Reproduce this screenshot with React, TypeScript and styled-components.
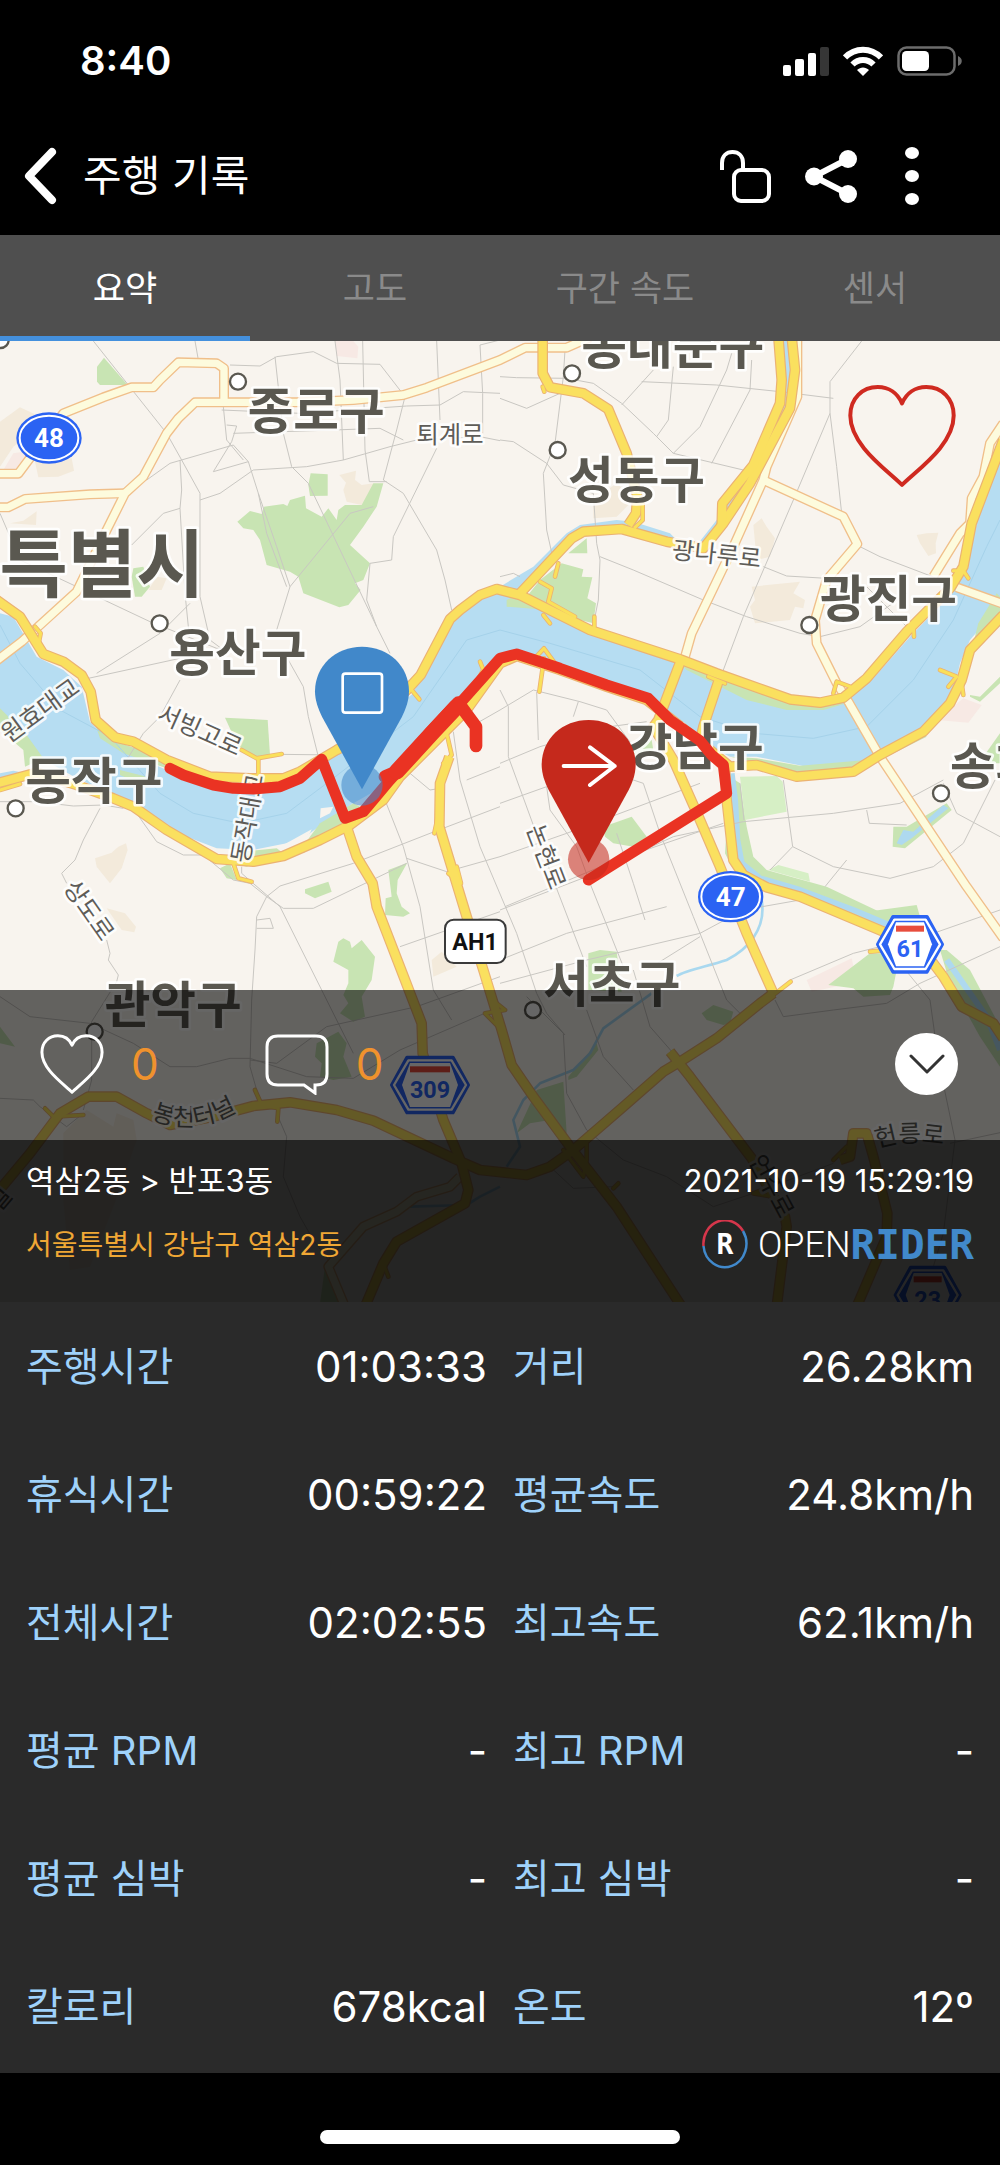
import React, { useState } from "react";
import styled, { createGlobalStyle } from "styled-components";

const Global = createGlobalStyle`
  *, *::before, *::after { box-sizing: border-box; }
  body {
    margin: 0;
    background: #000;
    color: #fff;
    font-family: Inter, "Noto Sans CJK KR", sans-serif;
  }
  button { font: inherit; color: inherit; background: none; border: 0; padding: 0; cursor: pointer; }
  svg { display: block; }
`;

const Screen = styled.div`
  display: flex;
  flex-direction: column;
`;

const StatusBar = styled.div`
  display: flex;
  align-items: center;
  justify-content: space-between;
  height: 122px;
  padding: 0 37px 0 80px;
`;

const Clock = styled.time`
  font-size: 40px;
  line-height: 48px;
  font-weight: 600;
`;

const StatusIcons = styled.div`
  display: flex;
  align-items: center;
  gap: 14px;
`;

const Header = styled.header`
  display: flex;
  align-items: center;
  height: 113px;
  padding: 0 67px 5px 24px;
`;

const Title = styled.h1`
  flex: 1;
  margin: 0 0 0 26px;
  font-size: 42px;
  line-height: 56px;
  font-weight: 400;
`;

const HeaderActions = styled.div`
  display: flex;
  align-items: center;
  gap: 34px;
`;

const IconButton = styled.button`
  display: flex;
  align-items: center;
  justify-content: center;
`;

const MoreButton = styled(IconButton)`
  width: 42px;
`;

const Tabs = styled.div`
  display: grid;
  grid-template-columns: repeat(4, 1fr);
  height: 106px;
  background: #4f4f4f;
`;

const Tab = styled.button<{ $active: boolean }>`
  border-top: 5px solid transparent;
  border-bottom: 5px solid ${(p) => (p.$active ? "#4490dd" : "transparent")};
  color: ${(p) => (p.$active ? "#fff" : "#8a8a8a")};
  font-size: 35px;
  line-height: 48px;
`;

const MapPanel = styled.section`
  position: relative;
  display: flex;
  flex-direction: column;
  overflow: hidden;
  background: #f8f4ee;
`;

const MapCanvas = styled.svg`
  position: absolute;
  inset: 0;
  width: 100%;
  height: 100%;
`;

const MapWindow = styled.div`
  position: relative;
  display: flex;
  align-items: flex-start;
  justify-content: flex-end;
  height: 649px;
  padding: 43px 43px 0;
`;

const ActionBar = styled.div`
  position: relative;
  display: flex;
  align-items: center;
  height: 150px;
  padding: 0 42px 2px 40px;
  background: rgba(0, 0, 0, 0.6);
`;

const CountButton = styled.button`
  display: flex;
  align-items: center;
  gap: 27px;
  margin-right: 106px;
  color: #f0922d;
  font-size: 44px;
  line-height: 62px;
`;

const CollapseButton = styled(IconButton)`
  width: 63px;
  height: 62px;
  margin-left: auto;
  border-radius: 50%;
  background: #fff;
`;

const RideInfo = styled.div`
  position: relative;
  display: flex;
  flex-direction: column;
  gap: 18px;
  padding: 19px 26px 33px;
  background: rgba(0, 0, 0, 0.85);
`;

const InfoRow = styled.div`
  display: flex;
  align-items: center;
  justify-content: space-between;
  font-size: 31px;
  line-height: 44px;
`;

const Address = styled.span`
  color: #efa735;
  font-size: 28px;
  line-height: 48px;
`;

const Brand = styled.span`
  display: flex;
  align-items: center;
  height: 48px;
`;

const BrandMark = styled.span`
  position: relative;
  display: grid;
  place-items: center;
  width: 46px;
  height: 50px;
  margin-right: 10px;
  font: 700 28px/50px "DejaVu Sans Mono", monospace;

  svg { position: absolute; inset: 0; }
`;

const BrandOpen = styled.span`
  font: 300 36px/48px "Roboto", sans-serif;
`;

const BrandRider = styled.span`
  color: #4189cb;
  font: 700 41px/48px "DejaVu Sans Mono", monospace;
`;

const Stats = styled.dl`
  display: grid;
  grid-template-columns: 1fr 1fr;
  column-gap: 26px;
  margin: 0;
  padding: 1px 26px 2px;
  background: #2a2a2a;
`;

const Stat = styled.div`
  display: flex;
  align-items: center;
  justify-content: space-between;
  height: 128px;
  line-height: 56px;
`;

const StatName = styled.dt`
  color: #9fd2fb;
  font-size: 40px;
`;

const StatValue = styled.dd`
  margin: 0;
  font-size: 42px;
`;

const HomeArea = styled.footer`
  display: flex;
  justify-content: center;
  padding: 57px 0 21px;
`;

const HomeIndicator = styled.div`
  width: 36%;
  height: 14px;
  border-radius: 7px;
  background: #fff;
`;

const HEART = "M50 99 C36 84 3 60 3 31 C3 14 14 3 28 3 C38 3 46 9 50 19 C54 9 62 3 72 3 C86 3 97 14 97 31 C97 60 64 84 50 99 Z";

function Heart({ width, height, color, stroke }: { width: number; height: number; color: string; stroke: number }) {
  return (
    <svg width={width} height={height} viewBox="0 0 100 102" preserveAspectRatio="none" aria-hidden="true">
      <path d={HEART} fill="none" stroke={color} strokeWidth={stroke} strokeLinejoin="round" vectorEffect="non-scaling-stroke" />
    </svg>
  );
}

/* Map geometry, in map units (three per screen pixel at the design width). */

const WATER = [
  "M0 1840 L40 1850 110 1970 190 2010 245 2060 270 2165 345 2240 400 2265 500 2310 630 2350 850 2355 1010 2265 1240 2080 1262 2025 1350 1857 1440 1785 1500 1770 1630 1830 1770 1900 2040 1985 2150 2040 2290 2105 2370 2130 2480 2125 2540 2100 2620 2035 2730 1910 2860 1775 2900 1700 2930 1570 3000 1380 L3000 1800 2970 1850 2910 1920 2880 1990 2860 2080 2800 2170 2700 2230 2600 2290 2420 2300 2270 2270 2190 2270 2100 2225 1940 2100 1680 2010 1550 1968 1500 1990 1380 2135 1200 2330 1060 2410 970 2470 930 2500 860 2530 760 2550 650 2545 560 2510 440 2440 340 2385 230 2335 125 2275 80 2210 0 2140 Z",
  "M1500 1760 L1600 1700 1700 1600 1740 1575 1850 1560 1900 1565 2010 1600 2040 1630 1990 1630 1865 1590 1750 1600 1715 1620 1560 1790 Z",
  "M2095 1630 L2150 1560 2180 1510 2280 1380 2350 1200 2352 1020 2368 1020 2372 1140 2360 1220 2270 1420 2190 1540 2130 1640 Z",
  "M0 2320 L40 2312 60 2316 0 2335 Z",
];

const LAND = "#f8f4ee";

const BUILT = [
  "M0 1265 L60 1222 110 1245 90 1300 40 1340 0 1400 Z",
  "M105 1385 L215 1375 222 1412 175 1430 115 1432 Z",
  "M30 1570 L70 1562 110 1534 108 1575 Z",
  "M1018 1425 L1068 1412 1065 1440 1085 1455 1120 1450 1118 1475 1085 1515 1040 1505 1030 1470 1038 1448 Z",
  "M445 1770 L470 1730 500 1735 485 1770 Z",
  "M285 2575 L335 2558 355 2540 378 2530 383 2550 365 2605 330 2650 290 2600 Z",
  "M320 2725 L375 2740 408 2780 403 2797 365 2790 Z",
  "M1780 1500 L1850 1450 1900 1500 1850 1550 1780 1555 Z",
  "M2260 1575 L2285 1555 2300 1580 2325 1615 2310 1670 2270 1680 Z",
  "M2255 1760 L2400 1745 2380 1780 2415 1800 2410 1825 2385 1820 2370 1860 2265 1870 2250 1820 2265 1800 Z",
  "M2750 1605 L2780 1600 2815 1598 2807 1630 2808 1660 2785 1668 2760 1630 Z",
  "M1295 2880 L1325 2855 1370 2900 1300 2930 Z",
  "M190 3400 L260 3330 340 3380 350 3340 400 3360 410 3420 340 3620 270 3800 210 3810 190 3600 Z",
];

const PINK = [
  "M1005 1023 L1060 1023 1075 1040 1072 1075 1010 1068 Z",
  "M10 1410 L40 1360 70 1355 90 1380 60 1410 Z",
  "M2810 2160 L2890 2095 2945 2115 2905 2168 Z",
  "M2420 2940 L2555 2875 2565 2920 2530 2955 2435 2975 Z",
];

const PARKS = [
  "M712 1565 L750 1533 785 1542 792 1520 850 1512 862 1518 870 1500 915 1487 918 1525 965 1550 985 1525 1010 1560 1015 1530 1035 1515 1085 1515 1120 1450 1150 1450 1130 1520 1090 1580 1050 1635 1110 1690 1090 1740 1065 1750 1082 1770 1045 1815 1018 1822 910 1780 895 1730 870 1715 800 1695 780 1620 760 1590 730 1585 Z",
  "M932 1420 L983 1423 983 1487 930 1488 925 1455 Z",
  "M312 1073 L383 1155 300 1155 291 1145 291 1100 Z",
  "M400 1705 L430 1700 450 1760 425 1790 405 1790 395 1730 Z",
  "M1705 1660 L1760 1615 1762 1660 Z",
  "M1685 1690 L1750 1708 1745 1730 1777 1732 1762 1795 1788 1810 1780 1870 1700 1850 1580 1790 1620 1740 Z",
  "M1520 1800 L1560 1780 1640 1830 1580 1825 1520 1820 Z",
  "M675 2153 L803 2160 810 2265 770 2275 715 2240 Z",
  "M0 2125 L80 2205 130 2275 75 2300 70 2250 0 2190 Z",
  "M285 2170 L350 2225 480 2270 500 2305 370 2260 300 2215 Z",
  "M360 2310 L440 2330 440 2360 360 2325 Z",
  "M1165 2610 L1222 2588 1193 2640 1190 2680 1205 2720 1230 2740 1210 2750 1155 2745 1157 2695 1175 2690 Z",
  "M915 2668 L985 2645 995 2675 945 2695 915 2680 Z",
  "M1000 2885 L1015 2825 1030 2815 1050 2825 1055 2845 1085 2820 1125 2870 1115 2940 1085 2990 1095 3050 1060 3065 1020 3040 1045 3010 1030 2985 1045 2950 1045 2910 Z",
  "M950 3130 L1015 3095 1040 3130 1030 3170 1055 3230 1000 3240 960 3230 965 3190 945 3170 Z",
  "M900 2550 L960 2470 1060 2410 1100 2430 1000 2500 910 2560 Z",
  "M720 2555 L830 2545 850 2560 740 2600 700 2590 Z",
  "M660 2605 L690 2590 710 2640 680 2635 Z",
  "M1810 2480 L1895 2450 1940 2510 1900 2540 1840 2530 1815 2510 Z",
  "M1830 2250 L1955 2220 1960 2250 1890 2290 Z",
  "M2190 2330 L2220 2350 2240 2480 2260 2570 2300 2610 2480 2660 2670 2750 2660 2790 2480 2720 2280 2650 2190 2590 2175 2560 Z",
  "M2040 1990 L2150 2030 2350 2105 2460 2120 2540 2110 2470 2130 2360 2130 2240 2100 2140 2050 2060 2010 Z",
  "M2190 2270 L2270 2275 2400 2297 2600 2280 2760 2185 2780 2210 2580 2310 2390 2325 2280 2290 Z",
  "M2680 2480 L2720 2480 2840 2410 2855 2430 2715 2545 2678 2540 Z",
  "M1765 2860 L1800 2850 1850 2855 1865 2975 1765 2970 Z",
  "M2485 2955 L2610 2860 2700 2860 2680 2960 2670 2985 2590 2990 2560 2965 Z",
  "M2600 2735 L2750 2715 2760 2750 2670 2770 Z",
  "M2820 2850 L2840 2850 2910 2910 3000 3080 3000 3200 2940 3110 2850 2950 Z",
  "M2105 3040 L2140 3015 2200 3035 2190 3070 2170 3075 2120 3060 Z",
  "M1550 3400 L1610 3270 1690 3245 1700 3400 1650 3360 1590 3370 Z",
  "M1705 3230 L1790 3130 1795 3150 1730 3230 1705 3240 Z",
  "M2910 2085 L2940 2090 3000 2030 3000 2050 2940 2105 2910 2090 Z",
  "M2935 1870 L2990 1780 3000 1790 3000 1850 2920 1930 Z",
  "M2950 2270 L3000 2200 3000 2290 2970 2290 Z",
  "M0 3080 L45 3140 0 3130 Z",
  "M960 3910 L975 3800 1020 3910 Z",
];

const LIGHT_PARKS = [
  "M2220 2330 L2330 2328 2348 2345 2360 2435 2235 2460 Z",
  "M2305 2610 L2335 2595 2425 2620 2430 2645 Z",
];

const CREEKS = [
  "M2195 2320 L2205 2400 2212 2520 2225 2590 2280 2635 2400 2670 2560 2730 2680 2780",
  "M2840 2880 L2910 2980 2960 3050 3000 3150",
];

const STREAMS = [
  "M2285 2700 C2300 2790 2240 2850 2180 2880 C2120 2900 2060 2910 2030 2928",
  "M1955 2980 L1810 3085 1770 3160 1720 3210 1620 3250 1570 3300 1540 3360 1560 3440 1520 3500",
  "M1500 3560 L1440 3590 1400 3615 1230 3620",
];

const STREETS = [
  "M280 1023 L500 1300 545 1380 600 1480 600 1790 630 1920 670 1950",
  "M585 1023 L595 1080",
  "M690 1095 L780 1098 830 1070 940 1055 1010 1090 1140 1093 1215 1190 1190 1290 1150 1440 1210 1480 1310 1650 1335 1740 1355 1830",
  "M825 1070 L850 1300 875 1400 925 1450 1130 1880 1170 1960",
  "M1005 1023 L1020 1140 1030 1380",
  "M1088 1023 L1095 1350 1108 1445 1160 1445",
  "M1310 1023 L1320 1260",
  "M1500 1020 L1440 1035 1448 1180 1448 1300",
  "M440 1440 L510 1390 700 1335 745 1385 775 1480 830 1640 870 1760 830 1890",
  "M775 1480 L800 1600 860 1760",
  "M600 1500 L660 1480 760 1410 920 1400 1030 1380 1170 1340 1250 1320 1440 1310 1500 1322",
  "M1310 1345 L1180 1610 1175 1680 1110 1690 1100 1800 1130 1880",
  "M670 1220 L680 1320 730 1380",
  "M665 1230 L900 1240 1220 1218 1320 1215 1390 1175 1500 1180",
  "M680 1275 L710 1278 695 1325 640 1415 745 1385",
  "M700 1300 L1000 1290 1140 1285 1210 1320",
  "M540 1380 L545 1470 540 1525 490 1540 395 1635",
  "M540 1525 L555 1780 568 1910",
  "M870 1760 L1050 1540 1120 1520",
  "M0 1540 L60 1680 230 1760",
  "M270 1780 L450 1865 650 1945 760 1950",
  "M265 2035 L540 1975",
  "M290 2020 L480 1900 570 1810",
  "M540 2040 L480 2150 430 2200 380 2280",
  "M865 1980 L910 2060 925 2150 955 2270",
  "M840 2263 L1010 2265",
  "M0 2405 L110 2405 220 2418 310 2415 370 2425",
  "M300 2425 L250 2520 225 2580 185 2620 200 2650",
  "M320 2820 L330 2860 325 2880 355 2925 350 2945 275 3065 275 3240 250 3330",
  "M410 2440 L470 2525 550 2565 610 2565 700 2640 750 2650 800 2690 850 2725 940 2725 1220 2590",
  "M725 2600 L725 2620 840 2720 970 2980 1060 3160",
  "M800 2690 L840 2658 1060 2590 1290 2500 1500 2420",
  "M800 2690 L770 2750 765 2850 755 3000 750 3200 770 3270",
  "M770 2760 L810 2755 820 2785 770 2785",
  "M1155 2400 L1210 2540 1260 2720 1300 2970 1355 3060",
  "M1230 2320 L1290 2370 1320 2365",
  "M1200 2840 L1500 2735",
  "M1220 2575 L1340 2615 1500 2570",
  "M1360 2195 L1380 2340 1440 2540 1550 2800 1610 2980 1640 3040 1695 3105",
  "M1430 2170 L1500 2130 1600 2070 1740 2105 1820 2130 1900 2240",
  "M1400 2340 L1500 2300",
  "M1500 2070 L1525 2120 1525 2270 1660 2640 1760 2900",
  "M1610 2075 L1615 2220",
  "M1500 2290 L1620 2240 1830 2180 1940 2165",
  "M1500 2410 L1640 2360",
  "M1500 2570 L1700 2500 2100 2350",
  "M1500 2730 L1760 2630 2020 2510 2230 2465 2500 2440 2700 2410 2830 2340",
  "M1515 2720 L1850 2580 2170 2470",
  "M1640 2360 L1650 2430 1730 2540 1770 2650 1870 2900",
  "M1735 2105 L1720 2150",
  "M1870 2330 L1930 2350 1980 2500 2080 2750 2180 3000 2220 3040",
  "M1850 2500 L1900 2650 1935 2760",
  "M1500 2880 L1700 2800 2000 2720",
  "M1500 2950 L1760 2880 2100 2800 2230 2730 2400 2700",
  "M1940 2910 L2100 2810",
  "M2220 2350 L2232 2460",
  "M2350 2340 L2378 2540 2310 2610",
  "M2378 2540 L2500 2600 2670 2635 2800 2600 2890 2530 2985 2340",
  "M2600 2430 L2608 2470 2720 2475",
  "M2830 2350 L2870 2440 3000 2510",
  "M2540 2580 L2475 2660",
  "M2370 2940 L2560 2860 2800 2800 3000 2730",
  "M2700 2890 L2790 3000 2815 3180 2865 3420 2830 3700 2800 3800",
  "M2325 3000 L2350 3050 2500 3030 2660 3010 2760 2950 3000 2840",
  "M1500 1130 L1550 1133 1700 1135 1780 1150 1865 1210 1960 1300 2020 1360 2230 1410",
  "M1695 1050 L1690 1130 1665 1330 1630 1420 1640 1590 1660 1680",
  "M1500 1195 L1580 1225 1680 1180",
  "M1500 1320 L1540 1325 1640 1390 1690 1455 1780 1480 1790 1630 1800 1680 1795 1800 1785 1850",
  "M1960 1110 L1865 1215",
  "M1925 1145 L2150 1155 2340 1175 2500 1195",
  "M2020 1100 L2005 1260 1970 1310",
  "M2195 1060 L2180 1110 2100 1280 2020 1360",
  "M2255 1080 L2250 1170 2135 1390",
  "M2585 1023 L2490 1145 2490 1240 2510 1400 2525 1540",
  "M2490 1240 L2380 1500 2230 1850 2170 2010",
  "M2290 1700 L2360 1728 2480 1735 2560 1730",
  "M2580 1640 L2640 1670 2850 1750",
  "M1800 1670 L1900 1710 2110 1800 2240 1850 2400 1900 2460 1910 2580 1880 2720 1780",
  "M2600 1760 L2720 1880",
  "M1500 1730 L1540 1720 1560 1730",
  "M0 2990 L90 3050 270 3070 400 3130 510 3200 590 3200 690 3175 750 3175 920 3230 1060 3235 1200 3150 1500 3020",
  "M750 3180 L830 3190 980 3080 1250 3020 1500 2930",
  "M0 3295 L100 3300 120 3320 200 3380 250 3340",
  "M830 3340 L860 3410 850 3530 900 3650 940 3720 1000 3800",
  "M1580 2990 L1690 3100 1700 3280 1760 3390 1870 3480 2000 3530 2140 3620 2260 3580 2500 3490",
  "M1900 2910 L1950 3080 2020 3160",
  "M1760 3030 L1810 3170 1900 3270",
  "M1650 3500 L1720 3565 1840 3560",
  "M2850 3430 L3000 3398",
];

const LIGHT_ROADS = [
  "M-20 1990 L65 1925 230 1775 320 1590 375 1480 430 1430 500 1300 535 1255 585 1207 900 1207 1060 1200 1210 1185 1280 1163 1500 1080 1575 1043 1700 1043 1770 1012",
  "M-10 1421 L55 1421 190 1240 310 1192 395 1162 460 1162 480 1140 535 1087 650 1090 672 1105 672 1207",
  "M-10 1522 L25 1522 75 1497 270 1483 375 1480",
  "M2392 1010 L2392 1190 2300 1400 2290 1440 2200 1640 2075 1900 2055 1970",
  "M2290 1440 L2530 1550 2572 1632 2480 1740 2445 1860 2450 1930 2510 2050 2545 2105 2640 2270 2900 2660 3010 2815",
  "M2800 1730 L2880 1600 2910 1570 2915 1495 2950 1430 2970 1330 3010 1270",
  "M2870 1762 L3010 1812",
  "M1380 3530 L1350 3560 1250 3590 1190 3635 1090 3680 985 3800 1035 3920",
];

const RAMPS = [
  "M1928 1500 L1928 1560 1905 1582",
  "M1628 1160 L1633 1175",
  "M725 2250 L770 2275 845 2262",
  "M775 2275 L775 2335",
  "M1235 2070 L1258 2098",
  "M700 2590 L715 2635 755 2645",
  "M0 2370 L60 2352",
  "M1675 1690 L1665 1730",
  "M1620 1745 L1655 1765 1645 1805 1725 1850",
  "M1783 1850 L1783 1880",
  "M1650 1870 L1630 1845",
  "M1632 1945 L1665 1990 1595 1985 Z",
  "M1632 1975 L1618 2075",
  "M1340 2200 L1355 2265 1330 2290",
  "M1440 1985 L1450 2010 1430 2045",
  "M1370 2600 L1383 2650 1345 2620",
  "M1320 2420 L1303 2500",
  "M105 1880 L122 1900 115 1935",
  "M2820 2010 L2870 2030 2845 2060",
  "M2885 2050 L2890 2085",
  "M2500 2080 L2510 2045 2550 2060",
  "M2125 2030 L2175 2050",
  "M2860 1712 L2890 1712 2905 1735",
  "M2740 1875 L2742 1910",
  "M2320 2985 L2372 2945",
  "M2610 2855 L2640 2852",
  "M1490 3010 L1515 3030 1455 3040 1490 3075",
  "M135 3325 L160 3350 250 3345",
  "M765 3270 L785 3315 835 3325 832 3365",
  "M1720 3450 L1760 3430 1760 3480 1750 3530 1690 3450",
  "M1840 3565 L1855 3550",
  "M2500 3480 L2540 3440",
  "M2260 3580 L2310 3560 2320 3590 Z",
  "M1150 3790 L1165 3830",
];

const MAIN_ROADS = [
  "M-10 1800 L60 1850 130 1962 190 1985 245 2025 272 2075 287 2160 345 2212 400 2225 500 2280 630 2330 750 2335 850 2335 900 2315 1010 2250 1100 2200 1230 2060 1262 2025 1350 1857 1380 1830 1440 1785 1490 1767 1560 1785 1630 1820 1770 1890 2040 1978 2150 2020 2370 2098 2460 2108 2530 2093 2600 2035 2720 1895 2850 1765 2890 1700 2915 1570 3010 1320",
  "M1560 1780 L1715 1615 1750 1595 1865 1587 2000 1625 2110 1645 2170 1570 2250 1450 2370 1225 2385 1110 2375 1010",
  "M2335 1010 L2345 1140 2340 1210 2260 1395 2167 1510 2165 1580",
  "M1628 1010 L1628 1120 1650 1162 1750 1180 1825 1228 1880 1360 1912 1490 1908 1540 1885 1575",
  "M-10 2350 L110 2318 230 2355 340 2395 400 2420 500 2490 650 2577 760 2585 850 2568 960 2520 1050 2475 1150 2400 1200 2330 1400 2130 1500 1990 1550 1968 1680 2010 1820 2060 1940 2100 2100 2225 2190 2300 2270 2295 2390 2330 2560 2315 2640 2265 2770 2195 2850 2110 2885 2040 2910 1950 3010 1845",
  "M2045 1975 L1975 2160 1960 2180 2020 2280 2100 2460 2160 2600 2240 2800 2320 2980",
  "M2155 2045 L2110 2180 2100 2225",
  "M2175 2300 L2180 2400 2200 2580 2230 2625 2300 2662 2400 2690 2650 2795 2800 2890 2830 2930 2885 3020 2980 3070 3010 3115",
  "M1040 2480 L1070 2570 1118 2650 1130 2720 1215 2940 1265 3070 1268 3160 1330 3360 1385 3490 1405 3570 1395 3610 1190 3725 1150 3790 1095 3920",
  "M1348 2270 L1320 2350 1318 2480 1400 2750 1450 2910 1505 3090 1535 3195 1600 3290 1710 3440 1850 3620 2045 3920",
  "M2320 2980 L2280 3010 2150 3115 2040 3185 1990 3215 1870 3320 1720 3450 1650 3500 1580 3525 1440 3510 1360 3475 1120 3362 1010 3330 870 3307 760 3318 640 3350 510 3375 440 3340 350 3290 265 3290 180 3340 90 3460 -10 3580",
  "M2010 3155 L2070 3230 2255 3475 2355 3650 2360 3680 2330 3920",
  "M2520 3480 L2550 3470 2560 3400 2600 3400 2620 3470 2662 3640 2660 3710 2570 3920",
];

const ROUTE = "M510 2305 L550 2325 640 2355 700 2365 760 2367 840 2360 900 2335 965 2278 1035 2455 1090 2435 1170 2340 1380 2110 1500 1975 1550 1962 1680 2005 1820 2055 1945 2095 2010 2160 2100 2222 2135 2265 2170 2295 2180 2380 1765 2640";

const DOTS = [
  [2, 1020], [714, 1145], [479, 1870], [1716, 1120], [1673, 1350],
  [2428, 1875], [47, 2425], [2823, 2380], [284, 3095], [1599, 3030],
];

const DISTRICTS = [
  { name: "동대문구", x: 1744, y: 1092 },
  { name: "종로구", x: 743, y: 1287 },
  { name: "성동구", x: 1704, y: 1493 },
  { name: "용산구", x: 508, y: 2012 },
  { name: "광진구", x: 2460, y: 1851 },
  { name: "동작구", x: 76, y: 2396 },
  { name: "강남구", x: 1880, y: 2295 },
  { name: "송파구", x: 2850, y: 2352 },
  { name: "관악구", x: 314, y: 3070 },
  { name: "서초구", x: 1630, y: 3005 },
];

const STREET_NAMES = [
  { name: "퇴계로", x: 1350, y: 1301, turn: 0 },
  { name: "광나루로", x: 2150, y: 1662, turn: 6 },
  { name: "원효대교", x: 120, y: 2130, turn: -36 },
  { name: "서빙고로", x: 600, y: 2190, turn: 24 },
  { name: "동작대교", x: 742, y: 2455, turn: -80 },
  { name: "상도로", x: 268, y: 2730, turn: 55 },
  { name: "논현로", x: 1640, y: 2570, turn: 69 },
  { name: "언주로", x: 2316, y: 3558, turn: 62 },
  { name: "널", x: -2, y: 3596, turn: -50 },
];

function Shapes({ paths, fill }: { paths: string[]; fill: string }) {
  return <g fill={fill}>{paths.map((d) => <path key={d} d={d} />)}</g>;
}

function Lines({ paths, color, width, cap = "butt" }: { paths: string[]; color: string; width: number; cap?: "butt" | "round" }) {
  return (
    <g fill="none" stroke={color} strokeWidth={width} strokeLinejoin="round" strokeLinecap={cap}>
      {paths.map((d) => <path key={d} d={d} />)}
    </g>
  );
}

const ShieldText = styled.text`
  font-family: "Roboto", sans-serif;
  font-weight: 700;
  text-anchor: middle;
`;

const DistrictText = styled.text`
  font: 700 149px "Noto Sans CJK KR", sans-serif;
  fill: #5a5850;
  stroke: rgba(255, 255, 255, 0.85);
  stroke-width: 16px;
  stroke-linejoin: round;
  paint-order: stroke;
`;

const CityText = styled(DistrictText)`
  font-size: 223px;
  text-anchor: end;
`;

const StreetText = styled(DistrictText)`
  font-size: 73px;
  font-weight: 400;
  fill: #5e5c58;
  text-anchor: middle;
`;

function OvalShield({ x, y, label }: { x: number; y: number; label: string }) {
  return (
    <g transform={`translate(${x} ${y})`}>
      <ellipse rx="98" ry="77" fill="#2b63f3" />
      <ellipse rx="88" ry="67" fill="none" stroke="#fff" strokeWidth="6" />
      <ShieldText y="27" fontSize="78" fill="#fff">{label}</ShieldText>
    </g>
  );
}

function HexShield({ x, y, w, label }: { x: number; y: number; w: number; label: string }) {
  const hex = (a: number, b: number) => {
    const k = w - 48 - (w - a) * 0.6;
    return `M${-k} ${-b} L${k} ${-b} L${a} 0 L${k} ${b} L${-k} ${b} L${-a} 0 Z`;
  };
  const bar = w - 60;
  return (
    <g transform={`translate(${x} ${y})`}>
      <path d={hex(w - 5, 83)} fill="#2b63f3" stroke="#2b63f3" strokeWidth="10" strokeLinejoin="round" />
      <path d={hex(w - 12, 74)} fill="#2b63f3" stroke="#fff" strokeWidth="7" strokeLinejoin="round" />
      <path d={`M${-bar} -66 L${bar} -66 L${w - 36} 0 L${bar} 66 L${-bar} 66 L${36 - w} 0 Z`} fill="#fff" />
      <rect x={-bar} y="-56" width={bar * 2} height="18" fill="#e84d3d" />
      <ShieldText y="38" fontSize="70" fill="#2b63f3">{label}</ShieldText>
    </g>
  );
}

function Pin({ x, y, color, halo, children }: { x: number; y: number; color: string; halo: number; children: React.ReactNode }) {
  return (
    <g transform={`translate(${x} ${y})`}>
      <circle cy={halo} r="62" fill={color} opacity="0.56" />
      <path d="M0 0 L-120 -218 C-132 -242 -141 -268 -141 -294 C-141 -370 -80 -428 0 -428 C80 -428 141 -370 141 -294 C141 -268 132 -242 120 -218 Z" fill={color} />
      <g fill="none" stroke="#fff" strokeLinecap="round" strokeLinejoin="round">{children}</g>
    </g>
  );
}

function RouteMap() {
  return (
    <MapCanvas viewBox="0 1023 3000 2883" preserveAspectRatio="xMidYMid slice" role="img" aria-label="주행 경로 지도">
      <defs>
        <path id="tunnel-curve" d="M448 3354 Q580 3412 716 3330" />
        <path id="heonreung-curve" d="M2622 3448 Q2710 3412 2840 3436" />
      </defs>
      <rect y="1000" width="3000" height="2920" fill={LAND} />
      <Shapes paths={BUILT} fill="#f3eadb" />
      <Shapes paths={PINK} fill="#f7e9e4" />
      <Shapes paths={WATER} fill="#b6ddf2" />
      <Shapes paths={PARKS} fill="#c8e4b3" />
      <Shapes paths={LIGHT_PARKS} fill="#d6efc5" />
      <path d="M2690 2530 L2710 2490 2740 2495 2830 2415 2845 2425 2735 2515 2705 2535 Z" fill="#aed9ef" />
      <path d="M962 2425 L1000 2420 990 2440 960 2455 Z M840 2540 L935 2488 930 2500 880 2530 Z" fill={LAND} />
      <g fill="none" stroke="#a5d2ea" strokeWidth="3">
        <path d="M0 1875 L60 1990 180 2130 330 2210 480 2380 580 2440 720 2470 860 2440 980 2350 1240 2150 1400 1920 1500 1890 1650 1930 1920 2010 2100 2150 2260 2200 2440 2215 2600 2180 2740 2040 2860 1860 2960 1640 3000 1560" />
      </g>
      <Lines paths={CREEKS} color="#aed9ef" width={18} />
      <Lines paths={STREAMS} color="#a9d8ef" width={8} />
      <Lines paths={STREETS} color="#c9c7c2" width={3} />
      <Lines paths={LIGHT_ROADS} color="#f0bf8a" width={30} />
      <Lines paths={LIGHT_ROADS} color="#fdfbdd" width={22} />
      <Lines paths={RAMPS} color="#ebb272" width={14} cap="round" />
      <Lines paths={MAIN_ROADS} color="#ebb272" width={32} />
      <Lines paths={RAMPS} color="#fae05a" width={9} cap="round" />
      <Lines paths={MAIN_ROADS} color="#fae05f" width={25} />
      {DOTS.map(([cx, cy]) => (
        <circle key={`${cx}-${cy}`} cx={cx} cy={cy} r="24" fill="#fff" stroke="#5a5850" strokeWidth="7" />
      ))}
      {STREET_NAMES.map((s) => (
        <StreetText key={s.name} y="27" transform={`translate(${s.x} ${s.y}) rotate(${s.turn})`}>{s.name}</StreetText>
      ))}
      <StreetText><textPath href="#tunnel-curve" startOffset="50%">봉천터널</textPath></StreetText>
      <StreetText><textPath href="#heonreung-curve" startOffset="50%">헌릉로</textPath></StreetText>
      {DISTRICTS.map((d) => (
        <DistrictText key={d.name} x={d.x} y={d.y}>{d.name}</DistrictText>
      ))}
      <CityText x="614" y="1772">특별시</CityText>
      <OvalShield x={147} y={1314} label="48" />
      <OvalShield x={2192} y={2690} label="47" />
      <rect x="1335" y="2759" width="182" height="130" rx="26" fill="#fff" stroke="#3a3a3a" strokeWidth="6" />
      <ShieldText x="1425" y="2849" fontSize="70" fill="#111">AH1</ShieldText>
      <HexShield x={2730} y={2833} w={102} label="61" />
      <HexShield x={1290} y={3255} w={120} label="309" />
      <HexShield x={2783} y={3885} w={102} label="23" />
      <g fill="none" stroke="#ea3323" strokeLinecap="round" strokeLinejoin="round">
        <path d={ROUTE} strokeWidth="33" />
        <path d="M1155 2330 L1190 2315 1290 2200 1375 2108 1428 2180 1428 2238" strokeWidth="38" />
        <path d="M1190 2315 L1300 2195 1370 2120" strokeWidth="48" />
      </g>
      <Pin x={1086} y={2368} color="#4188ca" halo={-13}>
        <rect x="-58" y="-347" width="118" height="117" rx="8" strokeWidth="8" />
      </Pin>
      <Pin x={1766} y={2588} color="#c5291c" halo={-10}>
        <path d="M-75 -290 H78 M4 -346 L78 -290 L4 -233" strokeWidth="12" />
      </Pin>
    </MapCanvas>
  );
}

const STATS: [string, string][] = [
  ["주행시간", "01:03:33"], ["거리", "26.28km"],
  ["휴식시간", "00:59:22"], ["평균속도", "24.8km/h"],
  ["전체시간", "02:02:55"], ["최고속도", "62.1km/h"],
  ["평균 RPM", "-"], ["최고 RPM", "-"],
  ["평균 심박", "-"], ["최고 심박", "-"],
  ["칼로리", "678kcal"], ["온도", "12º"],
];

const TABS = ["요약", "고도", "구간 속도", "센서"];

export default function App() {
  const [tab, setTab] = useState(0);
  return (
    <Screen>
      <Global />
      <StatusBar>
        <Clock>8:40</Clock>
        <StatusIcons aria-hidden="true">
          <svg width="46" height="30" viewBox="0 0 46 30" fill="#fff">
            <rect x="0" y="19" width="8" height="11" rx="2" />
            <rect x="12" y="13" width="9" height="17" rx="2" />
            <rect x="25" y="7" width="8" height="23" rx="2" />
            <rect x="37" y="1" width="9" height="29" rx="2" fill="#363636" />
          </svg>
          <svg width="40" height="30" viewBox="0 0 40 30">
            <g fill="none" stroke="#fff" strokeWidth="6">
              <path d="M2 11.5 C12 1 28 1 38 11.5" />
              <path d="M9.5 18.5 C15.5 12.5 24.5 12.5 30.5 18.5" />
            </g>
            <path d="M14 24 C17.5 20.5 22.5 20.5 26 24 L20 30 Z" fill="#fff" />
          </svg>
          <svg width="66" height="30" viewBox="0 0 66 30">
            <rect x="1.5" y="1.5" width="56" height="27" rx="8" fill="none" stroke="#6c6c6c" strokeWidth="2.5" />
            <rect x="5" y="5" width="27" height="20" rx="4.5" fill="#fff" />
            <path d="M61 10 C66 12 66 18 61 20 Z" fill="#6c6c6c" />
          </svg>
        </StatusIcons>
      </StatusBar>

      <Header>
        <IconButton aria-label="뒤로">
          <svg width="33" height="58" viewBox="0 0 33 58" fill="none" stroke="#fff" strokeWidth="8" strokeLinecap="round" strokeLinejoin="round">
            <path d="M28 5 L5 29 L28 53" />
          </svg>
        </IconButton>
        <Title>주행 기록</Title>
        <HeaderActions>
          <IconButton aria-label="공개 설정">
            <svg width="51" height="53" viewBox="0 0 51 53" fill="none" stroke="#fff" strokeWidth="4">
              <path d="M2 20 V13 C2 6 6.5 2 12.5 2 C18.5 2 23 6 23 13 V20" />
              <rect x="14" y="20" width="35" height="31" rx="7" />
            </svg>
          </IconButton>
          <IconButton aria-label="공유">
            <svg width="52" height="53" viewBox="0 0 52 53" fill="#fff">
              <path d="M43 9 L9 26.5 L43 44" fill="none" stroke="#fff" strokeWidth="6" />
              <circle cx="43" cy="9" r="9" />
              <circle cx="9" cy="26.5" r="9" />
              <circle cx="43" cy="44" r="9" />
            </svg>
          </IconButton>
          <MoreButton aria-label="더보기">
            <svg width="14" height="60" viewBox="0 0 14 60" fill="#fff">
              <ellipse cx="7" cy="7" rx="7" ry="6" />
              <ellipse cx="7" cy="30" rx="7" ry="6" />
              <ellipse cx="7" cy="53" rx="7" ry="6" />
            </svg>
          </MoreButton>
        </HeaderActions>
      </Header>

      <Tabs role="tablist">
        {TABS.map((name, i) => (
          <Tab key={name} role="tab" aria-selected={tab === i} $active={tab === i} onClick={() => setTab(i)}>
            {name}
          </Tab>
        ))}
      </Tabs>

      <MapPanel>
        <RouteMap />
        <MapWindow>
          <IconButton aria-label="좋아요">
            <Heart width={110} height={104} color="#cf2a20" stroke={4} />
          </IconButton>
        </MapWindow>
        <ActionBar>
          <CountButton aria-label="좋아요 0">
            <Heart width={64} height={60} color="#fff" stroke={3} />0
          </CountButton>
          <CountButton aria-label="댓글 0">
            <svg width="64" height="61" viewBox="0 0 64 61" fill="none" stroke="#fff" strokeWidth="3">
              <path d="M13 2 H51 Q62 2 62 13 V40 Q62 51 51 51 H50 V59 L39 51 H13 Q2 51 2 40 V13 Q2 2 13 2 Z" />
            </svg>
            0
          </CountButton>
          <CollapseButton aria-label="접기">
            <svg width="36" height="22" viewBox="0 0 36 22" fill="none" stroke="#333" strokeWidth="3" strokeLinecap="round" strokeLinejoin="round">
              <path d="M2 3 L18 19 L34 3" />
            </svg>
          </CollapseButton>
        </ActionBar>
        <RideInfo>
          <InfoRow>
            <span>역삼2동 &gt; 반포3동</span>
            <time>2021-10-19 15:29:19</time>
          </InfoRow>
          <InfoRow>
            <Address>서울특별시 강남구 역삼2동</Address>
            <Brand>
              <BrandMark>
                <svg width="46" height="50" viewBox="0 0 46 50" fill="none" strokeWidth="2.5" aria-hidden="true">
                  <path d="M1.5 26 A21.5 23.5 0 0 1 41 11" stroke="#d6364b" />
                  <path d="M41 11 A21.5 23.5 0 1 1 1.5 26" stroke="#4189cb" />
                </svg>
                R
              </BrandMark>
              <BrandOpen>OPEN</BrandOpen>
              <BrandRider>RIDER</BrandRider>
            </Brand>
          </InfoRow>
        </RideInfo>
      </MapPanel>

      <Stats>
        {STATS.map(([name, value]) => (
          <Stat key={name}>
            <StatName>{name}</StatName>
            <StatValue>{value}</StatValue>
          </Stat>
        ))}
      </Stats>

      <HomeArea>
        <HomeIndicator />
      </HomeArea>
    </Screen>
  );
}
